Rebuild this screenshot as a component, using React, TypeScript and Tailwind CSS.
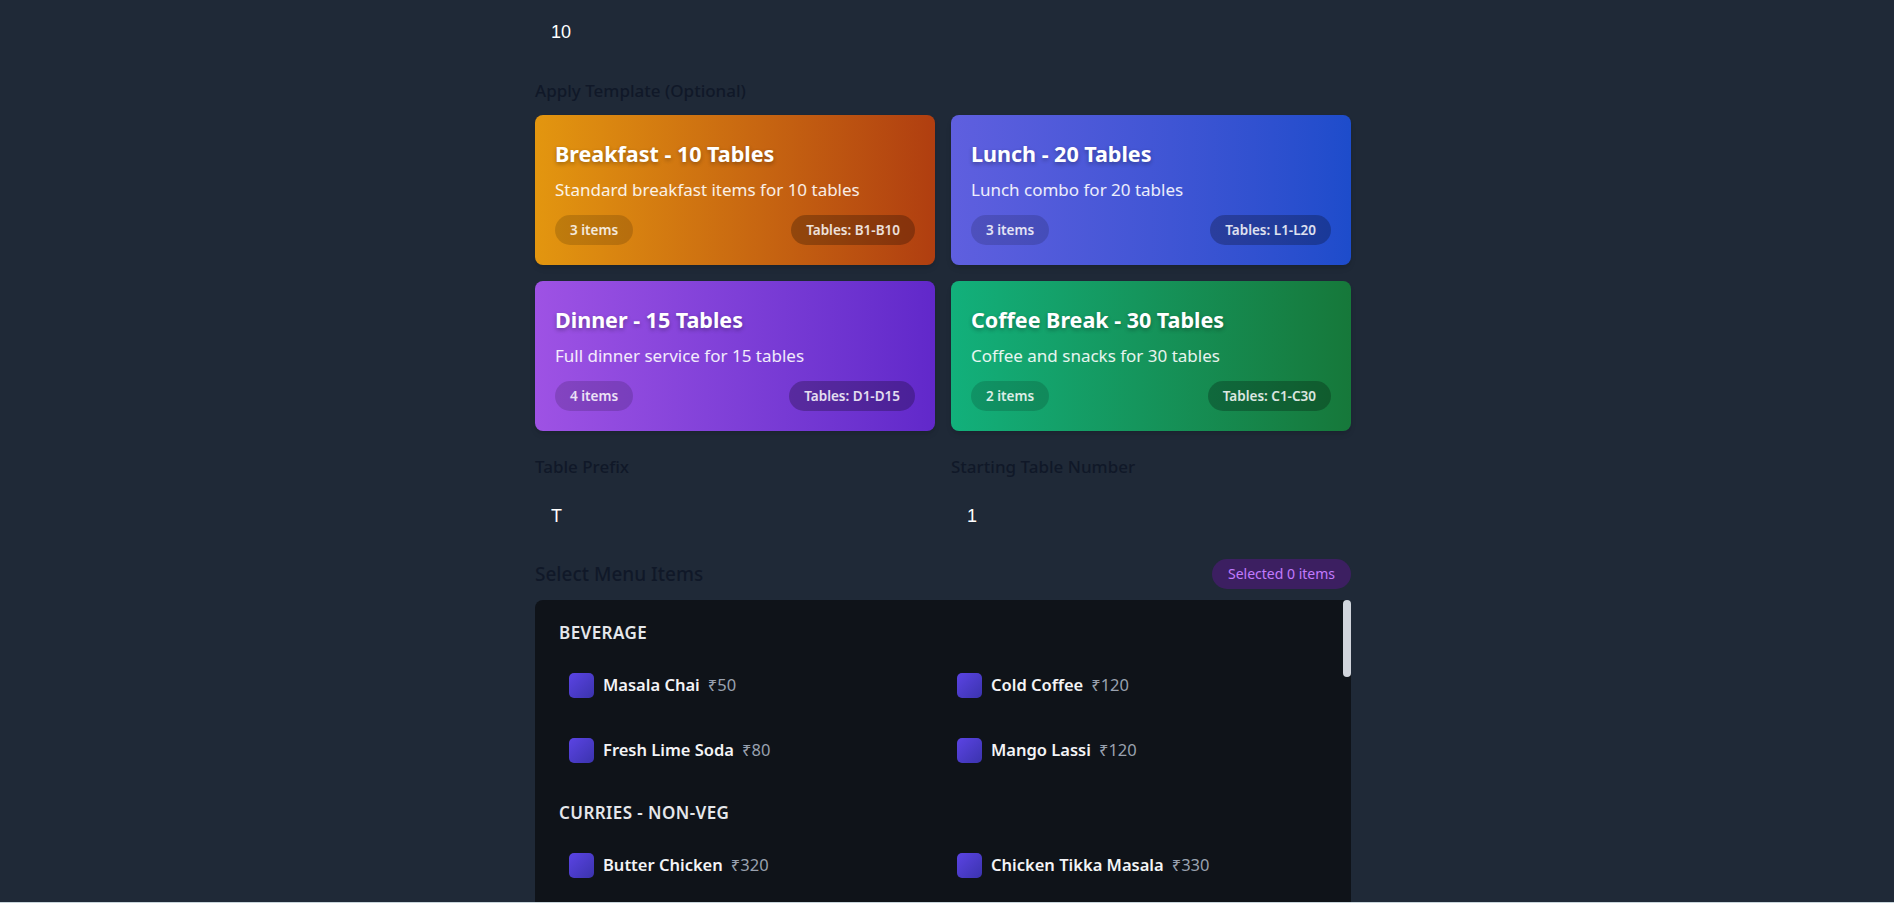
import React from 'react'

type Template = {
  title: string
  description: string
  items: number
  tables: string
  gradient: string
}

const templates: Template[] = [
  {
    title: 'Breakfast - 10 Tables',
    description: 'Standard breakfast items for 10 tables',
    items: 3,
    tables: 'B1-B10',
    gradient: 'from-[#e3960f] to-[#b03e10]',
  },
  {
    title: 'Lunch - 20 Tables',
    description: 'Lunch combo for 20 tables',
    items: 3,
    tables: 'L1-L20',
    gradient: 'from-[#5f5fdf] to-[#1d4ccb]',
  },
  {
    title: 'Dinner - 15 Tables',
    description: 'Full dinner service for 15 tables',
    items: 4,
    tables: 'D1-D15',
    gradient: 'from-[#9e52e4] to-[#6128ca]',
  },
  {
    title: 'Coffee Break - 30 Tables',
    description: 'Coffee and snacks for 30 tables',
    items: 2,
    tables: 'C1-C30',
    gradient: 'from-[#12b07b] to-[#16783a]',
  },
]

const menu: { category: string; items: [string, number][] }[] = [
  {
    category: 'Beverage',
    items: [
      ['Masala Chai', 50],
      ['Cold Coffee', 120],
      ['Fresh Lime Soda', 80],
      ['Mango Lassi', 120],
    ],
  },
  {
    category: 'Curries - Non-Veg',
    items: [
      ['Butter Chicken', 320],
      ['Chicken Tikka Masala', 330],
      ['Mutton Rogan Josh', 380],
      ['Chicken Curry', 280],
    ],
  },
  {
    category: 'Curries - Veg',
    items: [
      ['Paneer Butter Masala', 260],
      ['Dal Makhani', 220],
      ['Palak Paneer', 250],
      ['Chana Masala', 200],
    ],
  },
  {
    category: 'Breads',
    items: [
      ['Butter Naan', 50],
      ['Garlic Naan', 60],
      ['Tandoori Roti', 30],
      ['Laccha Paratha', 55],
    ],
  },
  {
    category: 'Rice & Biryani',
    items: [
      ['Jeera Rice', 150],
      ['Veg Biryani', 240],
      ['Chicken Biryani', 300],
      ['Steamed Rice', 120],
    ],
  },
  {
    category: 'Desserts',
    items: [
      ['Gulab Jamun', 80],
      ['Rasmalai', 100],
      ['Kulfi', 90],
      ['Gajar Halwa', 110],
    ],
  },
]

function TemplateCard({ t }: { t: Template }) {
  return (
    <button
      type="button"
      className={`rounded-lg bg-linear-to-r ${t.gradient} px-5 pt-[25px] pb-5 text-left shadow-md`}
    >
      <h3 className="text-[21.5px] leading-7 font-bold text-white [text-shadow:0_2px_4px_rgba(0,0,0,0.3)]">
        {t.title}
      </h3>
      <p className="mt-2.5 text-[17px] leading-6 text-white/90">{t.description}</p>
      <div className="mt-[13px] flex items-center justify-between">
        <span className="h-[30px] rounded-full bg-black/15 px-[15px] text-[13.5px] leading-[30px] font-semibold text-white/85">
          {t.items} items
        </span>
        <span className="h-[30px] rounded-full bg-black/25 px-[15px] text-[13.5px] leading-[30px] font-semibold text-white/85">
          Tables: {t.tables}
        </span>
      </div>
    </button>
  )
}

function Field({ label, value }: { label: string; value: string }) {
  return (
    <div>
      <label className="mb-3 block text-[17px] leading-6 font-medium text-gray-900">{label}</label>
      <input
        readOnly
        value={value}
        className="h-[50px] w-full rounded-lg bg-transparent px-4 font-['Liberation_Sans',sans-serif] text-lg text-white outline-none"
      />
    </div>
  )
}

export default function App() {
  return (
    <div className="flex h-screen flex-col overflow-hidden bg-[#1f2937] font-['Noto_Sans',sans-serif]">
      <div className="flex-1 overflow-hidden pr-2">
        <div className="mx-auto w-[816px] pt-[7px]">
          <input
            readOnly
            value="10"
            className="h-[50px] w-full rounded-lg bg-transparent px-4 font-['Liberation_Sans',sans-serif] text-lg text-white outline-none"
          />

          <label className="mt-[22px] mb-3 block text-[17px] leading-6 font-medium text-gray-900">
            Apply Template (Optional)
          </label>
          <div className="grid grid-cols-2 gap-4">
            {templates.map((t) => (
              <TemplateCard key={t.title} t={t} />
            ))}
          </div>

          <div className="mt-6 grid grid-cols-2 gap-4">
            <Field label="Table Prefix" value="T" />
            <Field label="Starting Table Number" value="1" />
          </div>

          <div className="mt-[18px] mb-[11px] flex items-center justify-between">
            <h3 className="text-[19px] leading-7 font-medium text-gray-900">Select Menu Items</h3>
            <span className="h-[30px] rounded-full bg-purple-900/50 px-4 text-[14px] leading-[30px] text-purple-400">
              Selected 0 items
            </span>
          </div>

          <div className="relative">
            <div className="max-h-96 overflow-hidden rounded-lg bg-[#0f1319] pt-[21px] pr-8 pb-6 pl-6">
              <div className="flex flex-col gap-[29px]">
                {menu.map((cat) => (
                  <div key={cat.category}>
                    <h4 className="mb-[18px] text-[17px] leading-6 font-semibold tracking-wide text-gray-200 uppercase">
                      {cat.category}
                    </h4>
                    <div className="grid grid-cols-2 gap-x-4 gap-y-[21px]">
                      {cat.items.map(([name, price]) => (
                        <label key={name} className="flex h-11 items-center rounded-lg px-2.5">
                          <span className="h-[25px] w-[25px] shrink-0 rounded-[5px] bg-linear-to-br from-[#5b44e4] to-[#3b33ae]" />
                          <span className="ml-[9px] text-[16.5px] font-semibold text-gray-100">{name}</span>
                          <span className="ml-2 text-[16.5px] text-gray-400">₹{price}</span>
                        </label>
                      ))}
                    </div>
                  </div>
                ))}
              </div>
            </div>
            {/* scrollbar thumb */}
            <div className="absolute top-0 right-0 h-[77px] w-2 rounded-full bg-gray-300" />
          </div>
        </div>
      </div>
      <div className="h-px bg-[#c8d5db]" />
    </div>
  )
}
